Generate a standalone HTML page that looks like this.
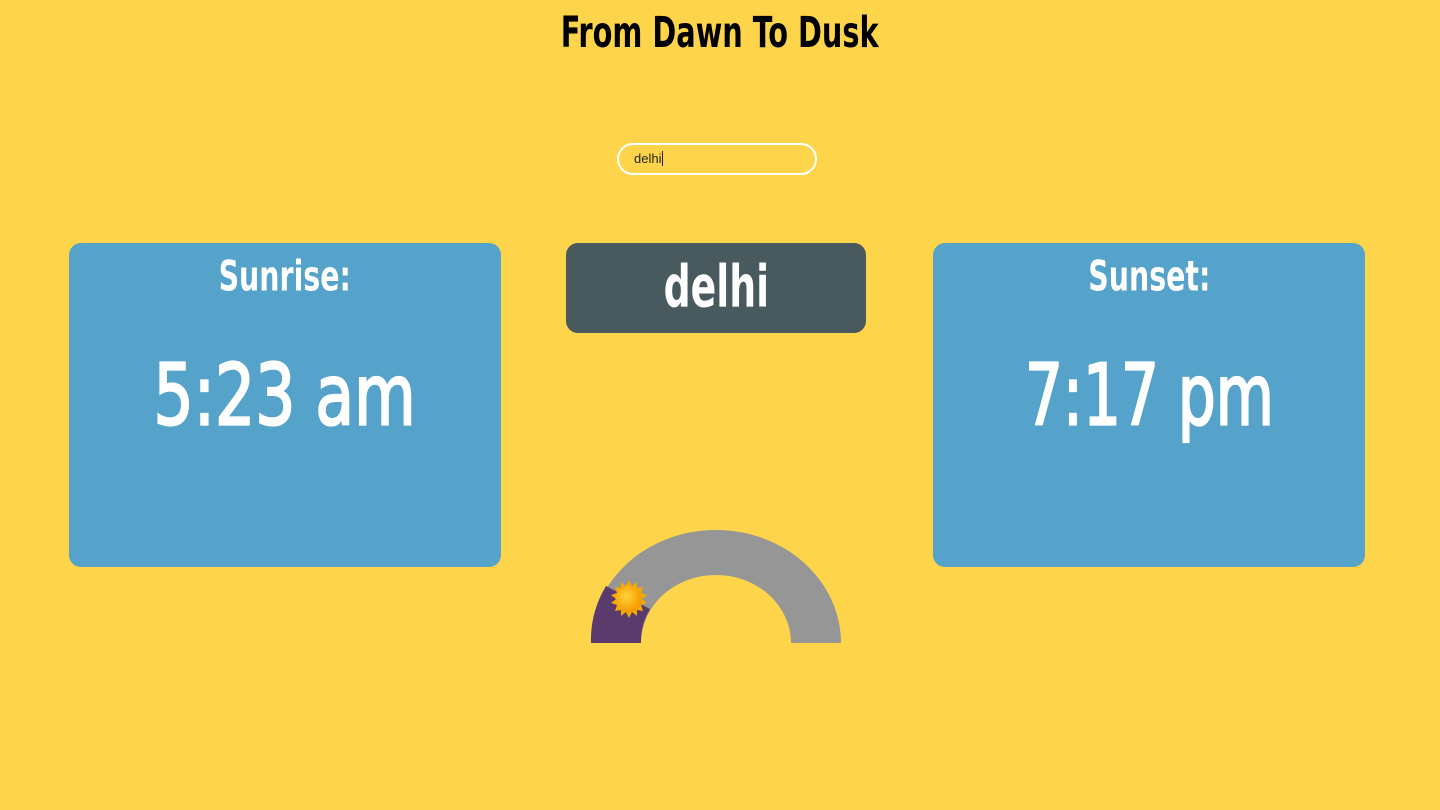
<!DOCTYPE html>
<html><head><style>
body{margin:0;width:1440px;height:810px;background:#fed54a;position:relative;overflow:hidden;font-family:"DejaVu Sans Condensed","Liberation Sans",sans-serif}
.t{position:absolute;left:0;width:100%;text-align:center;white-space:nowrap}
.box{position:absolute;border-radius:12px;background:#55a2cb}
.s{display:inline-block;transform-origin:center}
.tm{-webkit-text-stroke:2px #fff}
</style></head><body>
<div class="t" style="top:10px;font-size:40px;font-weight:bold;color:#000"><span class="s" style="transform:scale(0.8,1.06)">From Dawn To Dusk</span></div>
<div style="position:absolute;left:617px;top:143px;width:196px;height:28px;border:2px solid #fff;border-radius:16px;box-sizing:content-box"></div>
<div style="position:absolute;left:634px;top:151px;font-family:'Liberation Sans',sans-serif;font-size:13px;color:#222">delhi<span style="border-left:1px solid #222;margin-left:1px"></span></div>
<div class="box" style="left:69px;top:243px;width:432px;height:324px">
 <div class="t" style="top:11px;font-size:40px;font-weight:bold;color:#fff"><span class="s" style="transform:scale(0.79,1.04)">Sunrise:</span></div>
 <div class="t" style="top:108px;font-size:78px;color:#fff"><span class="s tm" style="transform:scale(0.9,1.09)">5:23 am</span></div>
</div>
<div class="box" style="left:933px;top:243px;width:432px;height:324px">
 <div class="t" style="top:11px;font-size:40px;font-weight:bold;color:#fff"><span class="s" style="transform:scale(0.79,1.04)">Sunset:</span></div>
 <div class="t" style="top:108px;font-size:78px;color:#fff"><span class="s tm" style="transform:scale(0.85,1.09)">7:17 pm</span></div>
</div>
<div class="box" style="left:566px;top:243px;width:300px;height:90px;background:#485a5e">
 <div class="t" style="top:12px;font-size:56px;font-weight:bold;color:#fff"><span class="s" style="transform:scale(0.75,1.03)">delhi</span></div>
</div>
<svg style="position:absolute;left:0;top:0" width="1440" height="810">
 <path d="M591 643 A125 113 0 0 1 841 643 L791 643 A75 68 0 0 0 641 643 Z" fill="#969696"/>
 <path d="M591 643 A125 113 0 0 1 606 586 L650 609 A75 68 0 0 0 641 643 Z" fill="#5b3b6d"/>
 <defs><radialGradient id="g" cx="0.4" cy="0.4" r="0.6"><stop offset="0" stop-color="#ffd23a"/><stop offset="1" stop-color="#f59a00"/></radialGradient></defs>
 <g transform="translate(629 599)">
  <polygon fill="#f7a800" points="0,-19 3,-13 8,-17 8,-11 14,-12 12,-6 18,-4 13,0 18,4 12,6 14,12 8,11 8,17 3,13 0,19 -3,13 -8,17 -8,11 -14,12 -12,6 -18,4 -13,0 -18,-4 -12,-6 -14,-12 -8,-11 -8,-17 -3,-13"/>
  <circle r="13" fill="url(#g)"/>
 </g>
</svg>
</body></html>
